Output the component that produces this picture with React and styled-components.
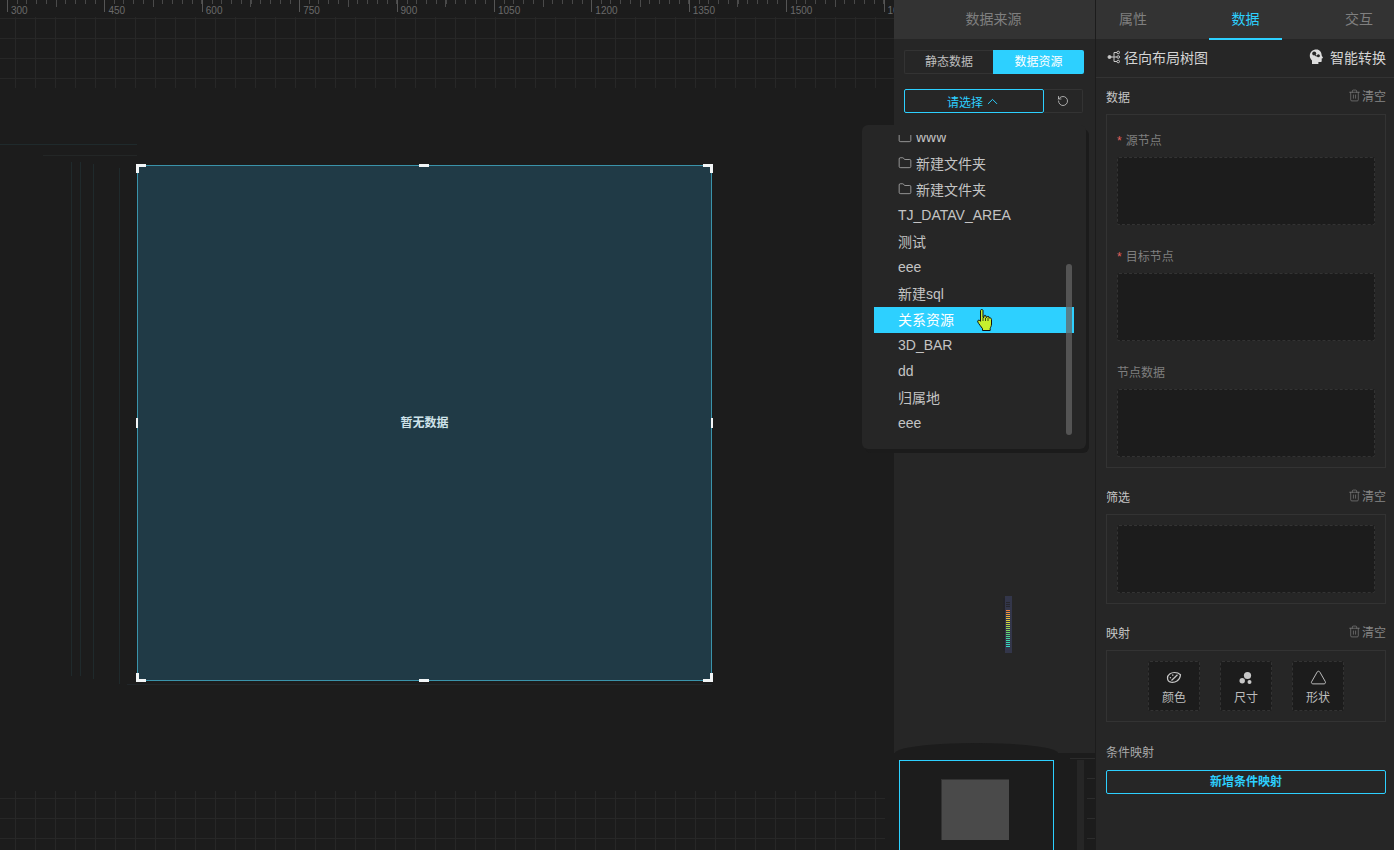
import React from 'react'
import styled, { createGlobalStyle } from 'styled-components'
import { Folder, Trash2, RotateCw, ChevronUp, Triangle } from 'lucide-react'

const CYAN = '#2dd0ff'
const FONT = '"Liberation Sans", "Noto Sans CJK SC", sans-serif'

const rulerMarks = [300, 450, 600, 750, 900, 1050, 1200, 1350, 1500, 1650]
const listRows = [
  { name: 'www', folder: true },
  { name: '新建文件夹', folder: true },
  { name: '新建文件夹', folder: true },
  { name: 'TJ_DATAV_AREA' },
  { name: '测试' },
  { name: 'eee' },
  { name: '新建sql' },
  { name: '关系资源', active: true },
  { name: '3D_BAR' },
  { name: 'dd' },
  { name: '归属地' },
  { name: 'eee' },
]
const meterColors = [
  '#f0803a', '#f0903a', '#f0a03a', '#eeb03a', '#e8c03a', '#e0cc3a', '#d4d43c', '#c0d840', '#aad84a', '#94d854',
  '#7ed860', '#68d86e', '#56d87e', '#4ad88e', '#42d89c', '#3cd8a8', '#38d8b2', '#36d8bc', '#34d8c4',
]

const RadialIcon = () => (
  <svg width="14" height="14" viewBox="0 0 14 14" fill="none" stroke="#c8c8c8" strokeWidth="1">
    <circle cx="3.5" cy="7" r="1.5" fill="#c8c8c8" />
    <circle cx="12.2" cy="2.5" r="1.3" />
    <circle cx="12.2" cy="7" r="1.3" />
    <circle cx="12.2" cy="11.5" r="1.3" />
    <path d="M4 7h7M8 2.5v9M8 2.5h3M8 11.5h3" />
  </svg>
)

const BrainIcon = () => (
  <svg width="15" height="16" viewBox="0 0 15 16">
    <path
      fill="#dcdcdc"
      d="M7.5.5C3.6.5.8 3.2.8 6.8c0 2 .9 3.4 2.2 4.6V15h6.4v-2h2.2c.7 0 1.100-.5 1.100-1.100V9.600l1.400-.6-1.400-2.600C12.600 3 10.600.5 7.500.5z"
    />
    <circle cx="5.2" cy="4.6" r="2" fill="#262626" />
    <circle cx="9.4" cy="6.8" r="1.5" fill="#262626" />
    <path d="M6 6.5l2.200.6" stroke="#262626" strokeWidth="1" />
  </svg>
)

const PaletteIcon = () => (
  <svg width="16" height="13" viewBox="0 0 16 13" fill="none" stroke="#c8c8c8" strokeWidth="1.200">
    <path d="M1.500 7C1.500 3.500 5 1.500 8.500 1.500c2.500 0 4.500.8 6 2.200-.2 2.500-1.500 5-3.500 6.300-1.800 1.200-4 1.500-6 1.200C3 10.800 1.500 9 1.500 7z" />
    <path d="M5.500 9.500L11.500 3.800" />
    <path d="M3.800 6.500l1.200.4M6.500 3.500l.5 1.200" />
  </svg>
)

const DotsIcon = () => (
  <svg width="14" height="14" viewBox="0 0 14 14" fill="#c8c8c8">
    <circle cx="8.5" cy="4.5" r="3.6" />
    <circle cx="3.2" cy="9.8" r="2.7" />
    <circle cx="10.5" cy="11" r="2" />
  </svg>
)

const HandCursor = () => (
  <svg width="16" height="23" viewBox="0 0 16 23">
    <path
      fill="#c6f02e"
      stroke="#111"
      strokeWidth="1"
      strokeLinejoin="round"
      d="M3.500 1.500c0-1.300 2.500-1.300 2.500 0v7l1-.2V7c0-1 2-1 2 0v1.300l1-.1V8c0-.9 2-.9 2 0v1l.7-.1c1.100 0 1.800.5 1.800 1.500v4.600c0 2.200-1 3.200-1.300 4.500v2H5.500v-1.800C4 17.500 1.800 15 .8 13c-.7-1.400 1-2.500 2-1.500l.7.8z"
    />
    <path d="M6 9v3M8.500 9v3M11 9v3" stroke="#111" strokeWidth="0.8" />
  </svg>
)

const LevelMeter = () => (
  <svg width="9" height="57" viewBox="0 0 9 57">
    <rect x="0" y="2" width="3" height="53" fill="#232328" />
    <rect x="2" y="0" width="7" height="57" fill="#33364a" />
    {[6, 8, 10].map((y) => (
      <rect key={y} x="3" y={y} width="4" height="1" fill="#26262c" />
    ))}
    {meterColors.map((color, i) => (
      <rect key={i} x="3" y={14 + i * 2} width="4" height="1" fill={color} />
    ))}
  </svg>
)

const GlobalStyle = createGlobalStyle`
  html, body {
    margin: 0;
    padding: 0;
    background: #1c1c1c;
    font-family: ${FONT};
    overflow: hidden;
  }
  * { box-sizing: border-box; }
`

const Page = styled.div`
  display: flex;
  width: 1394px;
  height: 850px;
  background: #1c1c1c;
  overflow: hidden;
`

const Canvas = styled.div`
  position: relative;
  flex: 0 0 894px;
  display: flex;
  flex-direction: column;
  justify-content: space-between;
  overflow: hidden;
`

const GridBand = styled.div`
  position: relative;
  height: ${(p) => p.$height}px;
  width: ${(p) => p.$width}px;
  background-image: linear-gradient(to right, #272727 1px, transparent 1px),
    linear-gradient(to bottom, #272727 1px, transparent 1px);
  background-size: 20px 20px;
  background-position: 15px ${(p) => p.$offsetY}px;
`

const Ruler = styled.div`
  display: flex;
  padding-left: 7px;
  height: 17px;
  background: #1c1c1c;
`

const RulerMark = styled.div`
  flex: 0 0 97.4px;
  height: 17px;
  padding: 5px 0 0 4px;
  font-size: 10px;
  line-height: 11px;
  color: #6a6a6a;
  background-image: linear-gradient(#555, #555), linear-gradient(#4a4a4a, #4a4a4a),
    repeating-linear-gradient(to right, #484848 0 1px, transparent 1px 9.74px);
  background-size: 1px 12px, 1px 7px, 100% 4px;
  background-position: 0 0, 48.7px 0, 0 0;
  background-repeat: no-repeat;
`

const Widget = styled.div`
  position: absolute;
  left: 137px;
  top: 165px;
  width: 575px;
  height: 516px;
  display: flex;
  align-items: center;
  justify-content: center;
  padding-bottom: 4px;
  background: #203a46;
  border: 1px solid #3a93aa;
  color: #cfe3ea;
  font-size: 12px;
  font-weight: 700;
`

const Corner = styled.span`
  position: absolute;
  width: 10px;
  height: 9px;
  ${(p) => (p.$top ? 'top: -2px;' : 'bottom: -2px;')}
  ${(p) => (p.$left ? 'left: -2px;' : 'right: -2px;')}
  border: 0 solid #f2f5f6;
  ${(p) => (p.$top ? 'border-top-width: 3px;' : 'border-bottom-width: 3px;')}
  ${(p) => (p.$left ? 'border-left-width: 3px;' : 'border-right-width: 3px;')}
`

const EdgeHandle = styled.span`
  position: absolute;
  background: #f2f5f6;
  ${(p) => (p.$vertical ? 'width: 2px; height: 10px; top: 252px;' : 'width: 10px; height: 3px; left: 281px;')}
  ${(p) => p.$side}: -2px;
`

const GuideH = styled.i`
  position: absolute;
  height: 1px;
  background: ${(p) => p.$color};
  left: ${(p) => p.$x}px;
  top: ${(p) => p.$y}px;
  width: ${(p) => p.$w}px;
`

const GuideV = styled.i`
  position: absolute;
  width: 1px;
  background: #1f2a2c;
  left: ${(p) => p.$x}px;
  top: ${(p) => p.$y}px;
  height: ${(p) => p.$h}px;
`

const DataColumn = styled.div`
  position: relative;
  flex: 0 0 201px;
  display: flex;
  flex-direction: column;
  height: 850px;
`

const DataBody = styled.div`
  position: relative;
  flex: 0 0 753px;
  background: #262626;
`

const PanelHeader = styled.div`
  height: 39px;
  line-height: 39px;
  padding-right: 2px;
  background: #333333;
  color: #7f7f7f;
  font-size: 14px;
  text-align: center;
`

const Segment = styled.div`
  display: flex;
  margin: 11px 0 0 10px;
  width: 180px;
  height: 24px;
`

const SegmentItem = styled.div`
  flex: 0 0 ${(p) => (p.$active ? 91 : 89)}px;
  line-height: ${(p) => (p.$active ? 24 : 22)}px;
  text-align: center;
  font-size: 12px;
  color: ${(p) => (p.$active ? '#fff' : '#bdbdbd')};
  background: ${(p) => (p.$active ? CYAN : 'transparent')};
  border: ${(p) => (p.$active ? '0' : '1px solid #333')};
  border-right: 0;
  border-radius: ${(p) => (p.$active ? '0 2px 2px 0' : '2px 0 0 2px')};
`

const SelectRow = styled.div`
  display: flex;
  margin: 15px 0 0 10px;
  height: 24px;
`

const SelectBox = styled.div`
  flex: 0 0 140px;
  display: flex;
  align-items: center;
  justify-content: center;
  gap: 1px;
  color: ${CYAN};
  font-size: 12px;
  border: 1px solid ${CYAN};
  border-radius: 2px;
`

const RefreshButton = styled.div`
  flex: 0 0 39px;
  display: flex;
  align-items: center;
  justify-content: center;
  border: 1px solid #333;
  border-left: 0;
  border-radius: 0 2px 2px 0;
  color: #c8c8c8;

  svg {
    transform: scaleX(-1);
  }
`

const Dropdown = styled.div`
  position: absolute;
  left: -32px;
  top: 125px;
  width: 224px;
  height: 324px;
  padding: 10px 12px 8px;
  background: #262626;
  border-radius: 6px;
  box-shadow: 3px 4px 0 #1b1b1b;
  z-index: 5;
`

const ListViewport = styled.div`
  position: relative;
  height: 306px;
  overflow: hidden;
`

const ListInner = styled.div`
  margin-top: -10px;
`

const ListRow = styled.div`
  display: flex;
  align-items: center;
  gap: 4px;
  width: 200px;
  height: 26px;
  padding: 0 0 2px 24px;
  font-size: 14px;
  color: ${(p) => (p.$active ? '#fff' : '#c4c4c4')};
  background: ${(p) => (p.$active ? CYAN : 'transparent')};
`

const ScrollThumb = styled.div`
  position: absolute;
  left: 192px;
  top: 129px;
  width: 6px;
  height: 171px;
  border-radius: 3px;
  background: rgba(100, 100, 100, 0.75);
`

const CursorSpot = styled.div`
  position: absolute;
  left: 103px;
  top: 174px;
  line-height: 0;
`

const MeterSpot = styled.div`
  position: absolute;
  left: 109px;
  top: 596px;
  line-height: 0;
`

const BottomCap = styled.div`
  position: absolute;
  left: 1px;
  bottom: 0;
  width: 163px;
  height: 10px;
  background: #1c1c1c;
  border-radius: 50% 50% 0 0 / 100% 100% 0 0;
`

const MiniArea = styled.div`
  position: relative;
  flex: 1;
  padding: 7px 0 0 5px;
  overflow: hidden;
`

const MiniMap = styled.div`
  width: 155px;
  height: 110px;
  padding: 18px 0 0 41px;
  border: 1px solid ${CYAN};
`

const MiniThumb = styled.div`
  width: 68px;
  height: 61px;
  background: #4a4a4a;
  border-top: 1px solid #333;
  border-left: 1px solid #333;
`

const MiniTrack = styled.div`
  position: absolute;
  left: 183px;
  top: 7px;
  width: 7px;
  height: 90px;
  background: #262626;
`

const MiniLine = styled.div`
  position: absolute;
  left: 176px;
  top: 5px;
  width: 25px;
  height: 1px;
  background: #2c2c2c;
`

const MiniTicks = styled.div`
  position: absolute;
  left: 193px;
  top: 25px;
  width: 8px;
  height: 80px;
  background-image: linear-gradient(to bottom, #2c2c2c 1px, transparent 1px);
  background-size: 100% 20px;
`

const PropsPanel = styled.div`
  flex: 0 0 299px;
  height: 850px;
  display: flex;
  flex-direction: column;
  background: #262626;
  border-left: 1px solid #1c1c1c;
`

const Tabs = styled.div`
  display: grid;
  grid-template-columns: 74px 151px 1fr;
  height: 39px;
  background: #333333;
`

const Tab = styled.div`
  width: ${(p) => (p.$active ? '73px' : 'auto')};
  justify-self: ${(p) => (p.$active ? 'center' : 'stretch')};
  line-height: 38px;
  text-align: center;
  font-size: 14px;
  color: ${(p) => (p.$active ? CYAN : '#7f7f7f')};
  border-bottom: 2px solid ${(p) => (p.$active ? CYAN : 'transparent')};

  &:last-child {
    padding-left: 3px;
  }
`

const ChartRow = styled.div`
  display: flex;
  align-items: center;
  justify-content: space-between;
  height: 39px;
  padding: 0 8px 3px 10px;
  border-bottom: 1px solid #333;
  font-size: 14px;
  color: #d4d4d4;
`

const ChartName = styled.div`
  display: flex;
  align-items: center;
  gap: 4px;
`

const Convert = styled.div`
  display: flex;
  align-items: center;
  gap: 6px;
`

const PropsBody = styled.div`
  padding: 0 8px 0 10px;
`

const SectionHead = styled.div`
  display: flex;
  align-items: center;
  justify-content: space-between;
  height: 36px;
  margin-top: ${(p) => p.$gap || 0}px;
  font-size: 12px;
  color: #c4c4c4;
`

const ConditionHead = styled(SectionHead)`
  padding-bottom: 2px;
  color: #a8a8a8;
`

const ClearLink = styled.div`
  display: flex;
  align-items: center;
  gap: 1px;
  margin-top: -2px;
  color: #858585;
  font-size: 12px;
`

const Box = styled.div`
  padding: ${(p) => p.$top || 10}px 10px 10px;
  border: 1px solid #333;
`

const Field = styled.div`
  & + & {
    margin-top: 22px;
  }
`

const FieldLabel = styled.div`
  height: 18px;
  line-height: 20px;
  margin-bottom: 8px;
  font-size: 12px;
  color: #7f7f7f;
`

const Required = styled.span`
  color: #e0605c;
  margin-right: 4px;
`

const DropZone = styled.div`
  height: 68px;
  background: #1c1c1c;
  border: 1px dashed #333;
  border-radius: 2px;
`

const TileRow = styled.div`
  display: flex;
  justify-content: center;
  gap: 20px;
`

const Tile = styled.div`
  width: 52px;
  height: 50px;
  display: flex;
  flex-direction: column;
  align-items: center;
  padding-top: 8px;
  gap: 5px;
  background: #1c1c1c;
  border: 1px dashed #333;
  border-radius: 2px;
  font-size: 12px;
  line-height: 16px;
  color: #bdbdbd;
`

const TileIcon = styled.div`
  height: 15px;
  display: flex;
  align-items: center;
`

const AddButton = styled.div`
  height: 24px;
  line-height: 22px;
  text-align: center;
  font-size: 12px;
  font-weight: 700;
  color: ${CYAN};
  border: 1px solid ${CYAN};
  border-radius: 2px;
`

const Clear = () => (
  <ClearLink>
    <Trash2 size={13} strokeWidth={1.2} />
    清空
  </ClearLink>
)

export default function App() {
  return (
    <Page>
      <GlobalStyle />
      <Canvas>
        <GridBand $height={88} $width={894} $offsetY={18}>
          <Ruler>
            {rulerMarks.map((mark) => (
              <RulerMark key={mark}>{mark}</RulerMark>
            ))}
          </Ruler>
        </GridBand>
        <GridBand $height={59} $width={885} $offsetY={7} />

        <GuideH $color="#1f2a2c" $x={0} $y={144} $w={137} />
        <GuideH $color="#232626" $x={43} $y={155} $w={94} />
        <GuideH $color="#212629" $x={127} $y={684} $w={585} />
        <GuideV $x={71} $y={162} $h={514} />
        <GuideV $x={80} $y={162} $h={514} />
        <GuideV $x={93} $y={164} $h={515} />
        <GuideV $x={119} $y={168} $h={516} />

        <Widget>
          暂无数据
          <Corner $top $left />
          <Corner $top />
          <Corner $left />
          <Corner />
          <EdgeHandle $side="top" />
          <EdgeHandle $side="bottom" />
          <EdgeHandle $vertical $side="left" />
          <EdgeHandle $vertical $side="right" />
        </Widget>
      </Canvas>

      <DataColumn>
        <DataBody>
          <PanelHeader>数据来源</PanelHeader>
          <Segment>
            <SegmentItem>静态数据</SegmentItem>
            <SegmentItem $active>数据资源</SegmentItem>
          </Segment>
          <SelectRow>
            <SelectBox>
              请选择
              <ChevronUp size={17} strokeWidth={1.4} />
            </SelectBox>
            <RefreshButton>
              <RotateCw size={12} strokeWidth={1.6} />
            </RefreshButton>
          </SelectRow>

          <MeterSpot>
            <LevelMeter />
          </MeterSpot>
          <BottomCap />

          <Dropdown>
            <ListViewport>
              <ListInner>
                {listRows.map((row, i) => (
                  <ListRow key={i} $active={row.active}>
                    {row.folder && <Folder size={14} strokeWidth={1.2} />}
                    {row.name}
                  </ListRow>
                ))}
              </ListInner>
              <ScrollThumb />
              <CursorSpot>
                <HandCursor />
              </CursorSpot>
            </ListViewport>
          </Dropdown>
        </DataBody>
        <MiniArea>
          <MiniMap>
            <MiniThumb />
          </MiniMap>
          <MiniLine />
          <MiniTrack />
          <MiniTicks />
        </MiniArea>
      </DataColumn>

      <PropsPanel>
        <Tabs>
          <Tab>属性</Tab>
          <Tab $active>数据</Tab>
          <Tab>交互</Tab>
        </Tabs>
        <ChartRow>
          <ChartName>
            <RadialIcon />
            径向布局树图
          </ChartName>
          <Convert>
            <BrainIcon />
            智能转换
          </Convert>
        </ChartRow>
        <PropsBody>
          <SectionHead>
            数据
            <Clear />
          </SectionHead>
          <Box $top={16}>
            <Field>
              <FieldLabel>
                <Required>*</Required>源节点
              </FieldLabel>
              <DropZone />
            </Field>
            <Field>
              <FieldLabel>
                <Required>*</Required>目标节点
              </FieldLabel>
              <DropZone />
            </Field>
            <Field>
              <FieldLabel>节点数据</FieldLabel>
              <DropZone />
            </Field>
          </Box>

          <SectionHead $gap={10}>
            筛选
            <Clear />
          </SectionHead>
          <Box>
            <DropZone />
          </Box>

          <SectionHead $gap={10}>
            映射
            <Clear />
          </SectionHead>
          <Box>
            <TileRow>
              <Tile>
                <TileIcon>
                  <PaletteIcon />
                </TileIcon>
                颜色
              </Tile>
              <Tile>
                <TileIcon>
                  <DotsIcon />
                </TileIcon>
                尺寸
              </Tile>
              <Tile>
                <TileIcon>
                  <Triangle size={17} strokeWidth={1.3} color="#c8c8c8" />
                </TileIcon>
                形状
              </Tile>
            </TileRow>
          </Box>

          <ConditionHead $gap={12}>条件映射</ConditionHead>
          <AddButton>新增条件映射</AddButton>
        </PropsBody>
      </PropsPanel>
    </Page>
  )
}
